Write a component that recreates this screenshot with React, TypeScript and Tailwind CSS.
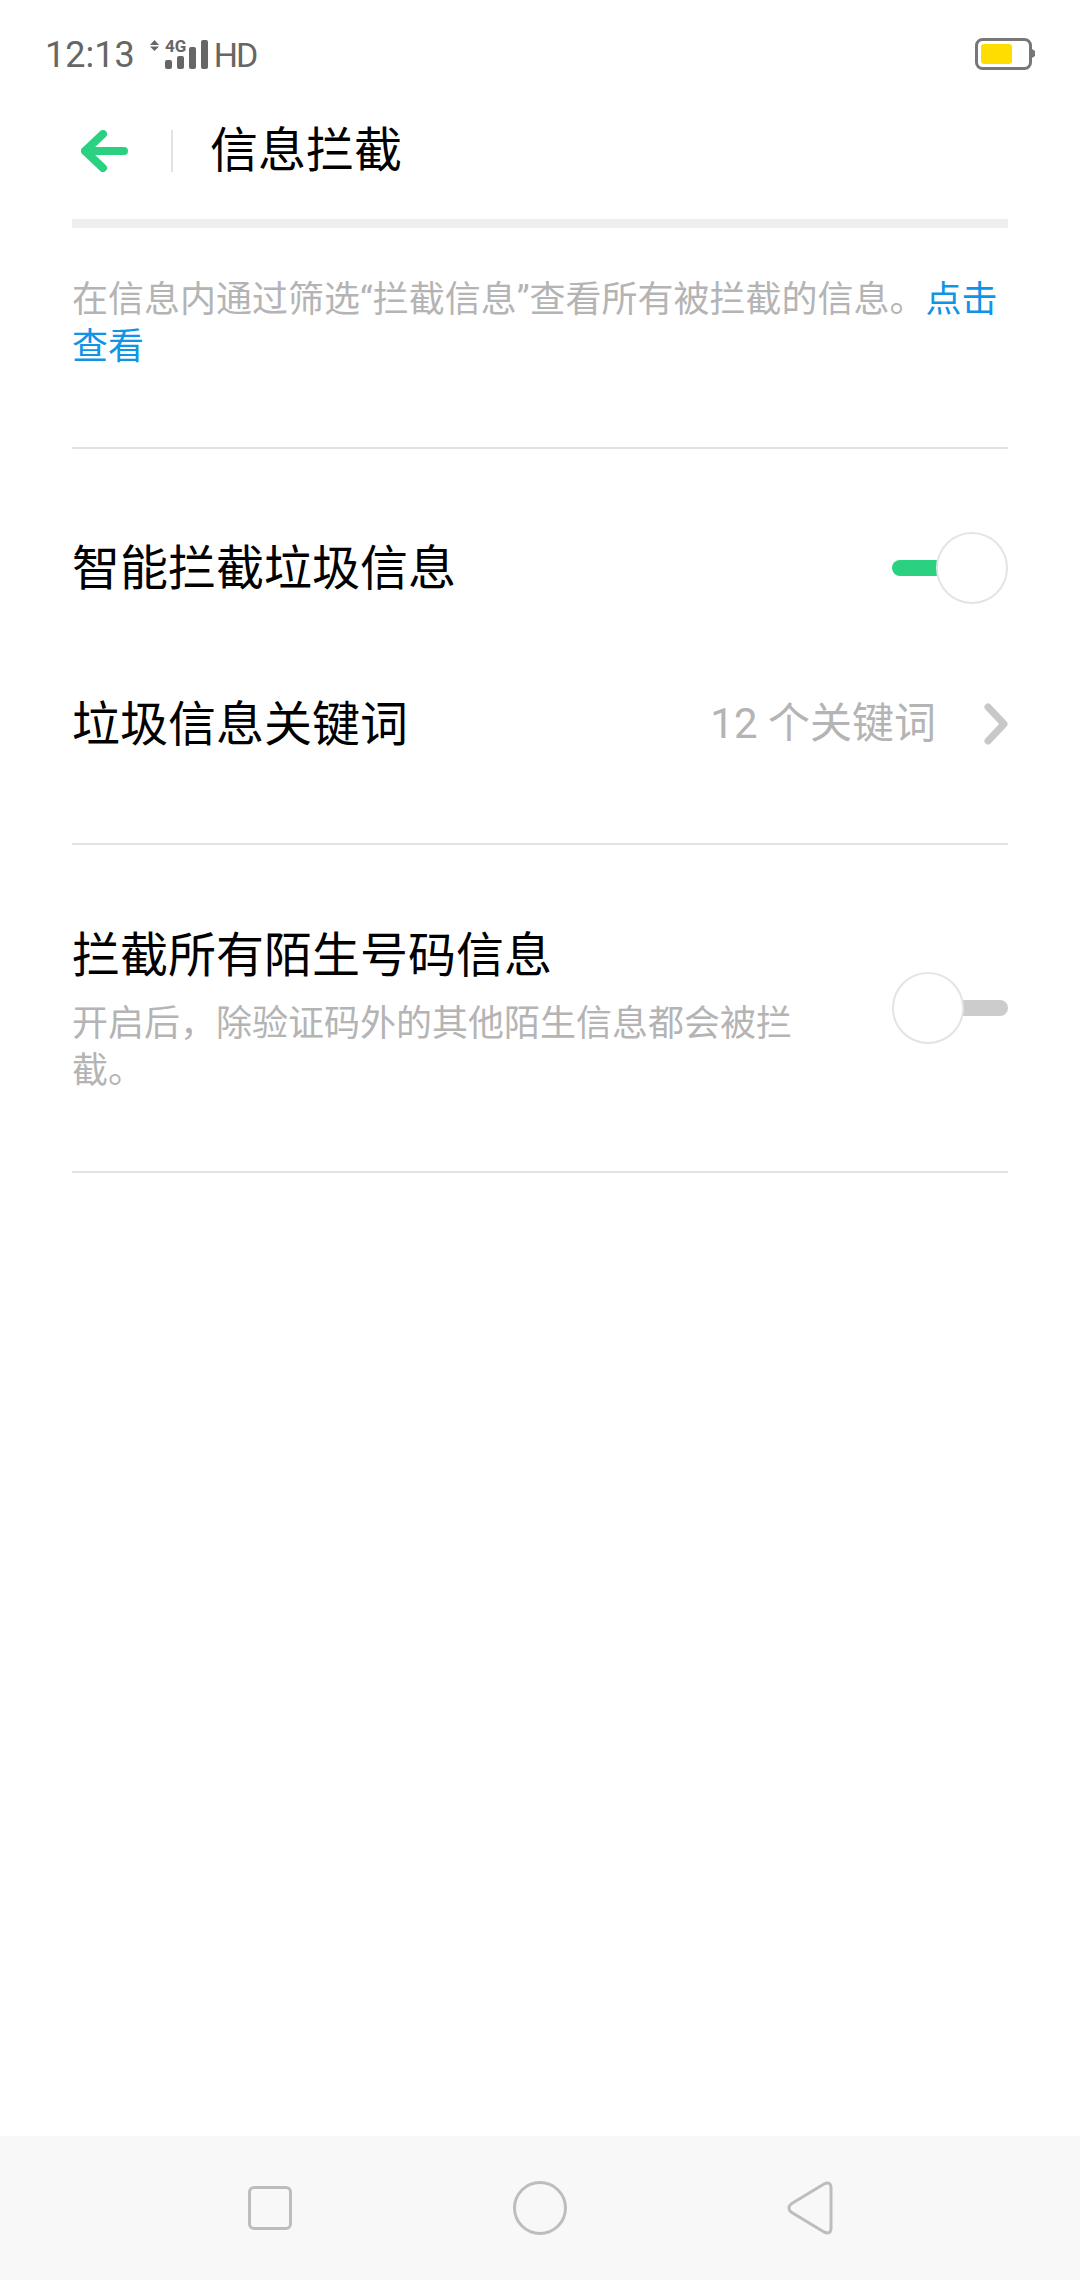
import React from 'react';

const fontStack = "font-['Roboto','Noto_Sans_CJK_SC',sans-serif]";

const StatusBar = () => (
  <div className="flex h-[76px] items-start justify-between pl-[45px] pr-[45px]">
    <div className="flex items-start">
      <span className="mt-[35px] text-[36px] leading-[40px] text-[#666666]">12:13</span>
      <svg className="ml-[15px] mt-[39px] overflow-visible" width="58" height="31" viewBox="0 0 58 31" fill="#666666">
        <path d="M4.5 1 L9 6 H0 Z M4.5 12 L9 7.5 H0 Z" />
        <text x="15" y="13" fontSize="17" fontWeight="700" fontFamily="Roboto, sans-serif">4G</text>
        <rect x="15" y="21" width="7" height="9" rx="2" />
        <rect x="27" y="17" width="7" height="13" rx="2" />
        <rect x="39" y="8" width="7" height="22" rx="2" />
        <rect x="51" y="1" width="7" height="29" rx="2" />
      </svg>
      <span className="ml-[6px] mt-[35px] text-[34px] leading-[40px] tracking-[-2px] text-[#666666]">HD</span>
    </div>
    <svg className="mt-[38px]" width="60" height="32" viewBox="0 0 60 32" fill="none">
      <rect x="1.5" y="1.5" width="54" height="29" rx="6" stroke="#777777" strokeWidth="3" />
      <rect x="6" y="6" width="31" height="20" rx="3" fill="#ffdd00" />
      <path d="M57 11 L60 13 V18 L57 20 Z" fill="#777777" />
    </svg>
  </div>
);

const Header = () => (
  <div className="flex h-[143px] items-center pl-[81px] pt-[6px]">
    <svg width="47" height="42" viewBox="0 0 47 42" fill="none" stroke="#2ad181" strokeWidth="8" strokeLinecap="round" strokeLinejoin="round">
      <path d="M22 4 L4 21 L22 38 M4 21 H43" />
    </svg>
    <div className="ml-[43px] h-[42px] w-[2px] bg-[#e2e2e2]" />
    <h1 className="ml-[37px] text-[48px] font-normal leading-[60px] text-black">信息拦截</h1>
  </div>
);

const Toggle = ({ on }: { on: boolean }) => (
  <div className="relative h-[72px] w-[116px] shrink-0">
    <div
      className={
        on
          ? 'absolute left-[0px] top-[28px] h-[16px] w-[60px] rounded-full bg-[#2ad181]'
          : 'absolute right-[0px] top-[28px] h-[16px] w-[60px] rounded-full bg-[#cccccc]'
      }
    />
    <div
      className={
        on
          ? 'absolute right-[0px] top-[0px] h-[72px] w-[72px] rounded-full border-2 border-[#e4e4e4] bg-white'
          : 'absolute left-[0px] top-[0px] h-[72px] w-[72px] rounded-full border-2 border-[#e4e4e4] bg-white'
      }
    />
  </div>
);

export default function App() {
  return (
    <div className={`flex h-[2280px] w-[1080px] flex-col overflow-hidden bg-white ${fontStack}`}>
      <StatusBar />
      <Header />

      <div className="flex-1 px-[72px]">
        <div className="h-[9px] bg-[#eeeeee]" />

        <p className="mt-[49px] text-[36px] leading-[47px] text-[#b4b4b4]">
          在信息内通过筛选“拦截信息”查看所有被拦截的信息。<span className="text-[#0f94e6]">点击查看</span>
        </p>

        <div className="mt-[76px] h-[2px] bg-[#e2e2e2]" />

        <div className="pb-[41px] pt-[41px]">
          <div className="flex h-[156px] items-center justify-between">
            <span className="pt-[2px] text-[48px] leading-[60px] text-black">智能拦截垃圾信息</span>
            <Toggle on />
          </div>
          <div className="flex h-[156px] items-center justify-between">
            <span className="pt-[2px] text-[48px] leading-[60px] text-black">垃圾信息关键词</span>
            <div className="flex items-center">
              <span className="text-[42px] leading-[60px] text-[#b4b4b4]">12 个关键词</span>
              <svg className="ml-[48px]" width="24" height="42" viewBox="0 0 24 42" fill="none" stroke="#c8c8c8" strokeWidth="7" strokeLinecap="round" strokeLinejoin="round">
                <path d="M4 4 L20 21 L4 38" />
              </svg>
            </div>
          </div>
        </div>

        <div className="h-[2px] bg-[#e2e2e2]" />

        <div className="flex items-start justify-between pb-[76px] pt-[81px]">
          <div className="w-[730px]">
            <div className="text-[48px] leading-[60px] text-black">拦截所有陌生号码信息</div>
            <div className="mt-[15px] text-[36px] leading-[47px] text-[#b4b4b4]">
              开启后&#65292;除验证码外的其他陌生信息都会被拦截。
            </div>
          </div>
          <div className="mt-[46px]">
            <Toggle on={false} />
          </div>
        </div>

        <div className="h-[2px] bg-[#e2e2e2]" />
      </div>

      <div className="flex h-[144px] items-center bg-[#f8f8f8] pl-[248px]">
        <div className="h-[44px] w-[44px] rounded-[6px] border-[3px] border-[#bdbdbd]" />
        <div className="ml-[221px] h-[54px] w-[54px] rounded-full border-[3px] border-[#bdbdbd]" />
        <svg className="ml-[220px]" width="46" height="54" viewBox="0 0 46 54" fill="none" stroke="#bdbdbd" strokeWidth="3" strokeLinejoin="round">
          <path d="M4 23 L37 3 Q44 0 44 7 V47 Q44 54 37 51 L4 31 Q0 27 4 23 Z" />
        </svg>
      </div>
    </div>
  );
}
